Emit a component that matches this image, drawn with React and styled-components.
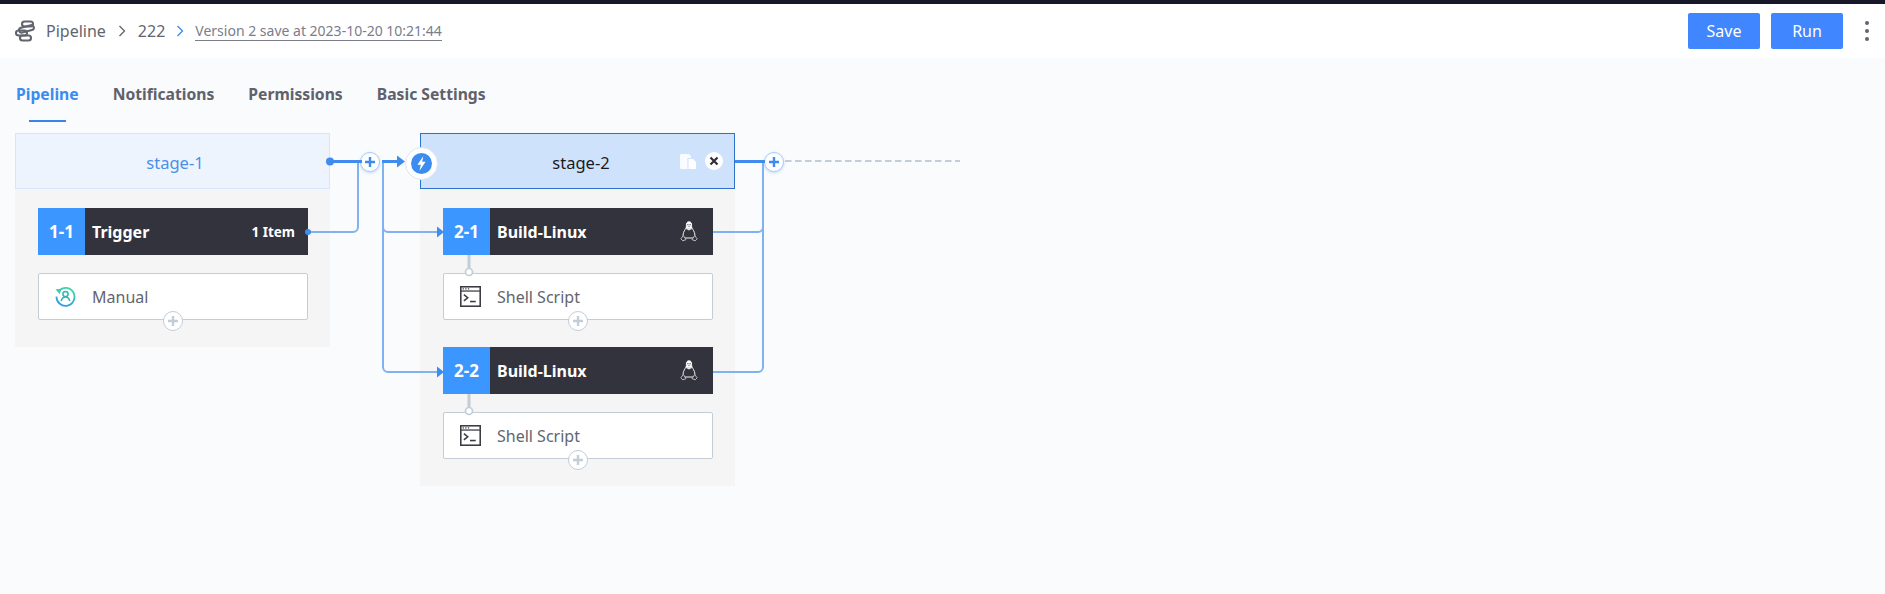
import React from "react";
import styled, { createGlobalStyle } from "styled-components";

const Global = createGlobalStyle`
  html, body { margin: 0; padding: 0; background: #f9fbfd; }
  body { font-family: "Noto Sans", "Open Sans", sans-serif; color: #63656e; }
  * { box-sizing: border-box; }
`;

const Page = styled.div`
  width: 1885px;
  height: 594px;
  overflow: hidden;
  background: #f9fbfd;
  display: flex;
  flex-direction: column;
  border-top: 4px solid #17172a;
`;

const Header = styled.header`
  height: 54px;
  flex: none;
  background: #fff;
  display: flex;
  align-items: center;
  padding: 0 16px 0 15px;
`;

const Crumb = styled.span`
  font-size: 16px;
  color: #63656e;
  margin-left: ${(p) => p.$gap || 0}px;
`;

const Version = styled.span`
  font-size: 14px;
  color: #7b7d8a;
  margin-left: 11px;
  margin-top: 1px;
  line-height: 18px;
  border-bottom: 1px solid #7b7d8a;
  white-space: nowrap;
`;

const Chevron = styled.svg`
  width: 8px;
  height: 12px;
  margin-left: ${(p) => p.$gap}px;
  fill: none;
  stroke: ${(p) => p.$color};
  stroke-width: 1.3;
`;

const Actions = styled.div`
  margin-left: auto;
  display: flex;
  align-items: center;
`;

const Primary = styled.button`
  width: 72px;
  height: 36px;
  margin-right: 11px;
  border: 0;
  border-radius: 2px;
  background: #3f86ff;
  color: #fff;
  font: 400 16px "Noto Sans", sans-serif;
  padding: 0;
`;

const More = styled.div`
  display: flex;
  flex-direction: column;
  gap: 4px;
  margin-left: 11px;
  width: 4px;
  & > i { width: 4px; height: 4px; border-radius: 50%; background: #63656e; display: block; }
`;

const Tabs = styled.nav`
  flex: none;
  height: 64px;
  display: flex;
  gap: 34px;
  padding: 25px 0 0 16px;
`;

const Tab = styled.div`
  position: relative;
  font-size: 15.7px;
  font-weight: 700;
  line-height: 22px;
  color: ${(p) => (p.$active ? "#3c8cf0" : "#5f616b")};
  ${(p) =>
    p.$active &&
    `&::after {
      content: "";
      position: absolute;
      left: 13px;
      right: 13px;
      top: 37px;
      height: 2px;
      background: #3a84ee;
    }`}
`;

const Canvas = styled.main`
  position: relative;
  flex: none;
  margin-top: 11px;
  padding-left: 15px;
  display: flex;
  align-items: flex-start;
  gap: 90px;
`;

const Wires = styled.svg`
  position: absolute;
  left: 0;
  top: 0;
  width: 1000px;
  height: 380px;
  pointer-events: none;
  overflow: visible;
`;

const Stage = styled.section`
  position: relative;
  width: 315px;
  background: #f5f5f5;
`;

const StageHead = styled.div`
  position: relative;
  height: 56px;
  display: flex;
  align-items: center;
  justify-content: center;
  font-size: 16.500px;
  padding-top: 2px;
  padding-left: ${(p) => (p.$editing ? 7 : 5)}px;
  background: ${(p) => (p.$editing ? "#cfe2fb" : "#edf4fe")};
  border: 1px solid ${(p) => (p.$editing ? "#2f73c9" : "#d6e7fb")};
  color: ${(p) => (p.$editing ? "#1a1a1f" : "#4a90e8")};
`;

const StageTools = styled.div`
  position: absolute;
  right: 11px;
  top: 18px;
  display: flex;
  align-items: center;
  gap: 9px;
`;

const CloseDot = styled.span`
  width: 18px;
  height: 18px;
  border-radius: 50%;
  background: #fff;
  display: flex;
  align-items: center;
  justify-content: center;
`;

const StageBadge = styled.span`
  position: absolute;
  left: -16px;
  top: 13px;
  width: 33px;
  height: 33px;
  border-radius: 50%;
  background: #fff;
  border: 1px solid #dfe6ef;
  display: flex;
  align-items: center;
  justify-content: center;
`;

const AddCircle = styled.span`
  position: absolute;
  width: 20px;
  height: 20px;
  border-radius: 50%;
  background: #fff;
  display: flex;
  align-items: center;
  justify-content: center;
  border: 1px solid ${(p) => (p.$grey ? "#c3cdd7" : "#a9cdf6")};
  box-shadow: ${(p) => (p.$grey ? "none" : "0 1px 3px rgba(90,150,230,.35)")};
  color: ${(p) => (p.$grey ? "#c3cdd7" : "#3c8cf0")};
`;

const AddStage = styled(AddCircle)`
  left: calc(100% + ${(p) => p.$x}px);
  top: 18px;
`;

const AddAtom = styled(AddCircle)`
  left: 50%;
  margin-left: -10px;
  bottom: -12px;
`;

const StageBody = styled.div`
  padding: 19px 22px 27px 23px;
  display: flex;
  flex-direction: column;
  gap: 27px;
`;

const Job = styled.div`
  display: flex;
  flex-direction: column;
  gap: 18px;
`;

const JobHead = styled.div`
  height: 47px;
  display: flex;
  align-items: center;
  background: #33333d;
  color: #fff;
  font-weight: 700;
`;

const JobIndex = styled.span`
  width: 47px;
  height: 47px;
  flex: none;
  background: #3c96ff;
  display: flex;
  align-items: center;
  justify-content: center;
  font-size: 17px;
`;

const JobName = styled.span`
  margin-left: 7px;
  font-size: 16px;
`;

const JobMeta = styled.span`
  margin-left: auto;
  margin-right: 13px;
  font-size: 13.500px;
`;

const JobOs = styled.svg`
  margin-left: auto;
  margin-right: 15px;
  width: 18px;
  height: 21px;
`;

const Atom = styled.div`
  position: relative;
  height: 47px;
  background: #fff;
  border: 1px solid #c3cdd7;
  border-radius: 2px;
  display: flex;
  align-items: center;
  padding-left: 16px;
  font-size: 16px;
  color: #63656e;
`;

const AtomIcon = styled.svg`
  width: 21px;
  height: 21px;
  margin-right: 16px;
  flex: none;
`;

const Plus = () => (
  <svg width="12" height="12" viewBox="0 0 12 12" aria-hidden="true">
    <path d="M6 1v10M1 6h10" stroke="currentColor" strokeWidth="2.4" />
  </svg>
);

const PipelineLogo = () => (
  <svg width="22" height="22" viewBox="0 0 22 22" fill="none" stroke="#63656e" strokeWidth="2.1" aria-hidden="true">
    <rect x="7" y="1.5" width="11" height="5" rx="2.5" />
    <rect x="4" y="6.5" width="15" height="5" rx="2.5" transform="rotate(-14 11 9)" />
    <rect x="1" y="10.5" width="11" height="5" rx="2.5" />
    <rect x="5" y="15.5" width="11" height="5" rx="2.5" />
  </svg>
);

const Tux = () => (
  <JobOs viewBox="0 0 18 21" aria-hidden="true">
    <path d="M9 .8C7 .8 6.300 2.300 6.400 4.300c.1 1.700-.3 2.700-1.200 4.100C4 10.200 3 12.300 3.100 14.600c.1 1.600 1.100 2.400 1.800 2.400h8.200c.7 0 1.700-.8 1.800-2.400.1-2.300-.9-4.400-2.100-6.200-.9-1.400-1.300-2.400-1.200-4.100C11.700 2.300 11 .8 9 .8Z" fill="none" stroke="#f4f4f4" strokeWidth="1" />
    <path d="M9 .8C7 .8 6.300 2.300 6.400 4.300c0 1.500-.2 2.500-.8 3.500h6.800c-.6-1-.8-2-.8-3.500C11.700 2.300 11 .8 9 .8Z" fill="#fff" />
    <circle cx="7.900" cy="3.700" r=".6" fill="#33333d" />
    <circle cx="10.100" cy="3.700" r=".6" fill="#33333d" />
    <path d="M7.500 5.200 9 4.700l1.500.5L9 6.200Z" fill="#9c9ca3" />
    <path d="M5.600 7.800 9 9.600l3.400-1.800-.6-.6H6.200Z" fill="#e4e4e4" />
    <path d="M.8 17.800 3.400 14.600l2.600 4-3.200 1.200ZM17.200 17.800l-2.600-3.200-2.600 4 3.200 1.200Z" fill="#33333d" stroke="#c9c9cf" strokeWidth=".9" />
  </JobOs>
);

const ShellIcon = () => (
  <AtomIcon viewBox="0 0 20 20" aria-hidden="true">
    <rect x=".75" y=".75" width="18.500" height="18.500" fill="#fff" stroke="#3c3c42" strokeWidth="1.500" />
    <path d="M1 4.800h18" stroke="#3c3c42" strokeWidth="1.200" />
    <path d="M2.500 2.800h1.200M5 2.800h1.200M7.500 2.800h1.200" stroke="#3c3c42" strokeWidth="1.200" />
    <path d="M3.700 8.300l3.600 2.900-3.600 2.900" fill="none" stroke="#3c3c42" strokeWidth="1.500" />
    <path d="M9.500 14.800h5.500" stroke="#3c3c42" strokeWidth="1.500" />
  </AtomIcon>
);

const ManualIcon = () => (
  <AtomIcon viewBox="0 0 21 21" fill="none" aria-hidden="true">
    <defs>
      <linearGradient id="manualGrad" x1="0.700" y1="0" x2="0.300" y2="1">
        <stop offset="0" stopColor="#3fd6a0" />
        <stop offset="1" stopColor="#2f9be8" />
      </linearGradient>
    </defs>
    <path d="M4 4.600A9 9 0 1 1 1.500 10.500" stroke="url(#manualGrad)" strokeWidth="1.800" />
    <path d="M.5 3.300l5.800-.2-1.500 5.200Z" fill="#3cc9a6" />
    <circle cx="10.500" cy="8" r="2.600" stroke="#2bb8b4" strokeWidth="1.500" />
    <path d="M6.300 15.200c.4-2.700 2.100-4.200 4.200-4.200s3.800 1.500 4.200 4.200" stroke="#2bb8b4" strokeWidth="1.500" />
  </AtomIcon>
);

const Bolt = () => (
  <svg width="21" height="21" viewBox="0 0 21 21" aria-hidden="true">
    <circle cx="10.500" cy="10.500" r="10.500" fill="#3c8cf0" />
    <path d="M12.300 3.300 6.400 11.800h3.400L8.500 17.800l6.100-9h-3.400l1.100-5.500Z" fill="#fff" />
  </svg>
);

const CopyIcon = () => (
  <svg width="16" height="15" viewBox="0 0 16 15" aria-hidden="true">
    <path d="M1 0h8l2 2v2H7.500v11H1a1 1 0 0 1-1-1V1a1 1 0 0 1 1-1Z" fill="#fff" fillOpacity=".85" />
    <path d="M8.500 5h4.500l3 3v7H8.500Z" fill="#fff" />
  </svg>
);

const CloseIcon = () => (
  <svg width="10" height="10" viewBox="0 0 10 10" aria-hidden="true">
    <path d="M1.500 1.500l7 7M8.500 1.500l-7 7" stroke="#2f2f38" strokeWidth="2.200" />
  </svg>
);

const WIRE = "#7eb3f0";
const MAIN = "#3f8cee";
const GREY = "#c3cdd7";

const Connectors = () => (
  <Wires viewBox="0 133 1000 380" fill="none" aria-hidden="true">
    <path d="M308 232H353a5 5 0 0 0 5-5V161" stroke={WIRE} strokeWidth="2" />
    <path d="M383 161V367a5 5 0 0 0 5 5H438" stroke={WIRE} strokeWidth="2" />
    <path d="M383 227a5 5 0 0 0 5 5H438" stroke={WIRE} strokeWidth="2" />
    <path d="M713 232H758a5 5 0 0 0 5-5V161" stroke={WIRE} strokeWidth="2" />
    <path d="M713 372H758a5 5 0 0 0 5-5V161" stroke={WIRE} strokeWidth="2" />
    <path d="M330 161.500H362M382 161.500H398M735 161.500H765" stroke={MAIN} strokeWidth="3" />
    <circle cx="330" cy="161.500" r="4" fill={MAIN} />
    <circle cx="308" cy="232" r="3" fill={MAIN} />
    <path d="M397 155.500l8 6-8 6Z" fill={MAIN} />
    <path d="M437 226.500l7 5.500-7 5.500ZM437 366.500l7 5.500-7 5.500Z" fill={MAIN} />
    <path d="M785 161H960" stroke={GREY} strokeWidth="2" strokeDasharray="6.500 3.500" />
    <path d="M469 255V269M469 394V408" stroke={GREY} strokeWidth="3" />
    <circle cx="469" cy="272" r="3.500" fill="#fff" stroke={GREY} strokeWidth="1.700" />
    <circle cx="469" cy="411" r="3.500" fill="#fff" stroke={GREY} strokeWidth="1.700" />
  </Wires>
);

export default function App() {
  return (
    <Page>
      <Global />
      <Header>
        <PipelineLogo />
        <Crumb $gap={9}>Pipeline</Crumb>
        <Chevron $gap={12} $color="#63656e" viewBox="0 0 8 12">
          <path d="M1.500 1l5 5-5 5" />
        </Chevron>
        <Crumb $gap={12}>222</Crumb>
        <Chevron $gap={11} $color="#3f86ee" viewBox="0 0 8 12">
          <path d="M1.500 1l5 5-5 5" />
        </Chevron>
        <Version>Version 2 save at 2023-10-20 10:21:44</Version>
        <Actions>
          <Primary>Save</Primary>
          <Primary>Run</Primary>
          <More>
            <i />
            <i />
            <i />
          </More>
        </Actions>
      </Header>
      <Tabs>
        <Tab $active>Pipeline</Tab>
        <Tab>Notifications</Tab>
        <Tab>Permissions</Tab>
        <Tab>Basic Settings</Tab>
      </Tabs>
      <Canvas>
        <Stage>
          <StageHead>
            stage-1
            <AddStage $x={31}>
              <Plus />
            </AddStage>
          </StageHead>
          <StageBody>
            <Job>
              <JobHead>
                <JobIndex>1-1</JobIndex>
                <JobName>Trigger</JobName>
                <JobMeta>1 Item</JobMeta>
              </JobHead>
              <Atom>
                <ManualIcon />
                Manual
                <AddAtom $grey>
                  <Plus />
                </AddAtom>
              </Atom>
            </Job>
          </StageBody>
        </Stage>
        <Stage>
          <StageHead $editing>
            <StageBadge>
              <Bolt />
            </StageBadge>
            stage-2
            <StageTools>
              <CopyIcon />
              <CloseDot>
                <CloseIcon />
              </CloseDot>
            </StageTools>
            <AddStage $x={30}>
              <Plus />
            </AddStage>
          </StageHead>
          <StageBody>
            {["2-1", "2-2"].map((id) => (
              <Job key={id}>
                <JobHead>
                  <JobIndex>{id}</JobIndex>
                  <JobName>Build-Linux</JobName>
                  <Tux />
                </JobHead>
                <Atom>
                  <ShellIcon />
                  Shell Script
                  <AddAtom $grey>
                    <Plus />
                  </AddAtom>
                </Atom>
              </Job>
            ))}
          </StageBody>
        </Stage>
        <Connectors />
      </Canvas>
    </Page>
  );
}
